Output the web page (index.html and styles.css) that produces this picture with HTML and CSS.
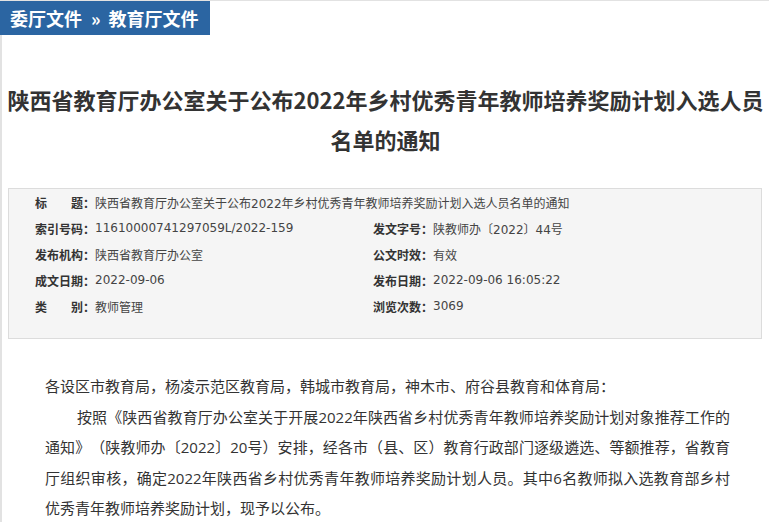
FILE: index.html
```html
<!DOCTYPE html>
<html lang="zh-CN">
<head>
<meta charset="utf-8">
<title>陕西省教育厅办公室关于公布2022年乡村优秀青年教师培养奖励计划入选人员名单的通知</title>
<link rel="stylesheet" href="styles.css">
</head>
<body>
<header class="crumbs">
  <span class="crumb-tab">委厅文件<span class="crumb-sep">»</span>教育厅文件</span>
</header>
<main class="article">
  <h1 class="article-title">陕西省教育厅办公室关于公布2022年乡村优秀青年教师培养奖励计划入选人员名单的通知</h1>

  <section class="meta">
    <div class="meta-row meta-wide">
      <span class="meta-label"><span class="meta-key">标题</span>：</span><span class="meta-value">陕西省教育厅办公室关于公布2022年乡村优秀青年教师培养奖励计划入选人员名单的通知</span>
    </div>
    <div class="meta-row">
      <span class="meta-label"><span class="meta-key">索引号码</span>：</span><span class="meta-value">11610000741297059L/2022-159</span>
    </div>
    <div class="meta-row">
      <span class="meta-label"><span class="meta-key">发文字号</span>：</span><span class="meta-value">陕教师办〔2022〕44号</span>
    </div>
    <div class="meta-row">
      <span class="meta-label"><span class="meta-key">发布机构</span>：</span><span class="meta-value">陕西省教育厅办公室</span>
    </div>
    <div class="meta-row">
      <span class="meta-label"><span class="meta-key">公文时效</span>：</span><span class="meta-value">有效</span>
    </div>
    <div class="meta-row">
      <span class="meta-label"><span class="meta-key">成文日期</span>：</span><span class="meta-value">2022-09-06</span>
    </div>
    <div class="meta-row">
      <span class="meta-label"><span class="meta-key">发布日期</span>：</span><span class="meta-value">2022-09-06 16:05:22</span>
    </div>
    <div class="meta-row">
      <span class="meta-label"><span class="meta-key">类别</span>：</span><span class="meta-value">教师管理</span>
    </div>
    <div class="meta-row">
      <span class="meta-label"><span class="meta-key">浏览次数</span>：</span><span class="meta-value">3069</span>
    </div>
  </section>

  <div class="body-text">
    <p>各设区市教育局，杨凌示范区教育局，韩城市教育局，神木市、府谷县教育和体育局：</p>
    <p class="indent">按照《陕西省教育厅办公室关于开展2022年陕西省乡村优秀青年教师培养奖励计划对象推荐工作的通知》（陕教师办〔2022〕20号）安排，经各市（县、区）教育行政部门逐级遴选、等额推荐，省教育厅组织审核，确定2022年陕西省乡村优秀青年教师培养奖励计划人员。其中6名教师拟入选教育部乡村优秀青年教师培养奖励计划，现予以公布。</p>
  </div>
</main>
</body>
</html>
```

FILE: styles.css
```css
html, body {
  margin: 0;
  padding: 0;
  background: #fff;
}

body {
  font-family: "Noto Sans CJK SC", "Noto Sans", sans-serif;
  color: #333;
  border-top: 1px solid #e2e2e2;
  text-spacing-trim: space-all;
}

/* breadcrumb tab */
.crumbs {
  display: flex;
  height: 34px;
}

.crumb-tab {
  display: block;
  background: #2b65a2;
  color: #fff;
  font-size: 18px;
  font-weight: bold;
  line-height: 34px;
  padding: 0 11px 0 10px;
  white-space: nowrap;
}

.crumb-sep {
  margin: 0 8px 0 9px;
}

/* article column */
.article {
  border-left: 2px solid #e2e2e2;
  padding-top: 44px;
  padding-bottom: 40px;
}

.article-title {
  margin: 0;
  padding: 0 4px;
  font-size: 22px;
  font-weight: bold;
  line-height: 40px;
  text-align: center;
  color: #333;
}

/* document metadata panel */
.meta {
  margin: 29px 7px 0 6px;
  border: 1px solid #dcdcdc;
  background: #f5f5f5;
  padding: 0 0 19px 26px;
  display: grid;
  grid-template-columns: 338px 1fr;
  grid-auto-rows: 26px;
  font-family: "DejaVu Sans", "Noto Sans CJK SC", sans-serif;
  font-size: 12px;
}

.meta-row {
  display: flex;
  align-items: center;
  white-space: nowrap;
}

.meta-wide {
  grid-column: 1 / -1;
}

.meta-label {
  display: flex;
  font-family: "Noto Sans CJK SC", sans-serif;
  font-weight: bold;
  color: #333;
}

.meta-key {
  display: inline-block;
  width: 48px;
  text-align: justify;
  text-align-last: justify;
}

.meta-value {
  color: #444;
}

/* body copy */
.body-text {
  margin-top: 32px;
  padding: 0 39px 0 43px;
  font-family: "Open Sans", "Noto Sans CJK SC", sans-serif;
  font-size: 15px;
  line-height: 30.5px;
  color: #333;
}

.body-text p {
  margin: 0;
  text-align: justify;
}

.body-text .indent {
  text-indent: 32px;
}
```
